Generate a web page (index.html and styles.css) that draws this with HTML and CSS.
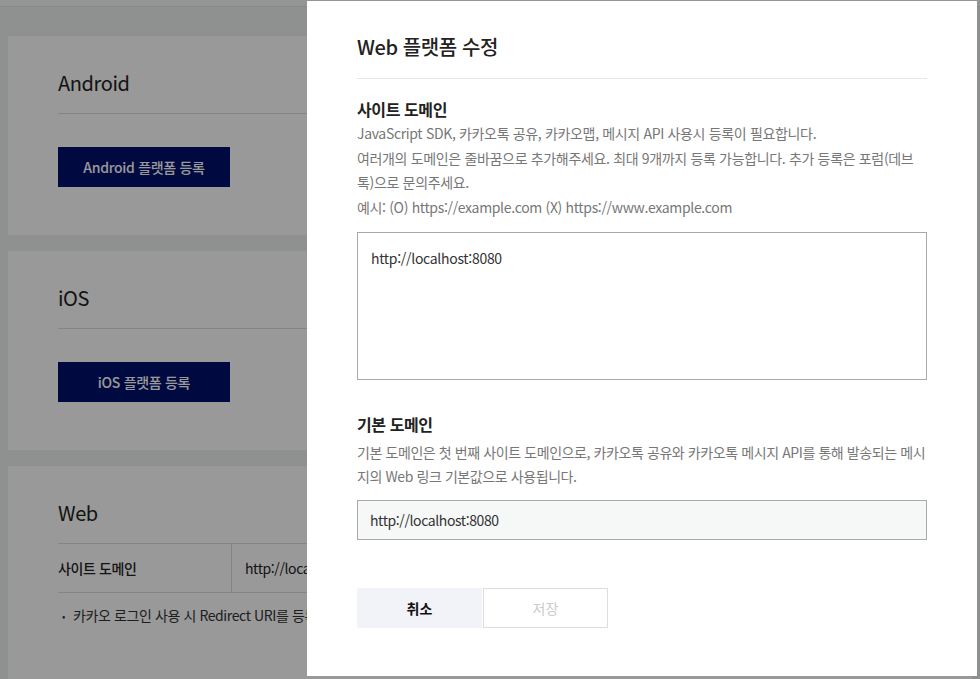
FILE: index.html
```html
<!DOCTYPE html>
<html lang="ko">
<head>
    <meta charset="UTF-8">
    <meta name="viewport" content="width=device-width, initial-scale=1.0">
    <title>플랫폼</title>
    <link rel="stylesheet" href="styles.css">
</head>
<body>
    <div class="cabecera"></div>
    <div class="contenido">
        <div class="tarjeta">
            <h2 class="tarjeta-titulo">Android</h2>
            <button class="boton-registro">Android 플랫폼 등록</button>
        </div>
        <div class="tarjeta">
            <h2 class="tarjeta-titulo">iOS</h2>
            <button class="boton-registro">iOS 플랫폼 등록</button>
        </div>
        <div class="tarjeta tarjeta-web">
            <h2 class="tarjeta-titulo">Web</h2>
            <div class="tabla-fila">
                <div class="tabla-celda tabla-nombre">사이트 도메인</div>
                <div class="tabla-celda">http://localhost:8080</div>
            </div>
            <ul class="notas">
                <li>카카오 로그인 사용 시 Redirect URI를 등록해야 합니다.</li>
            </ul>
        </div>
    </div>

    <div class="capa"></div>

    <div class="modal">
        <h1 class="modal-titulo">Web 플랫폼 수정</h1>
        <div class="campo">
            <h3>사이트 도메인</h3>
            <p class="ayuda">JavaScript SDK, 카카오톡 공유, 카카오맵, 메시지 API 사용시 등록이 필요합니다.<br>
            여러개의 도메인은 줄바꿈으로 추가해주세요. 최대 9개까지 등록 가능합니다. 추가 등록은 포럼(데브톡)으로 문의주세요.<br>
            예시: (O) https://example.com (X) https://www.example.com</p>
            <textarea class="area-dominios">http://localhost:8080</textarea>
        </div>
        <div class="campo campo-basico">
            <h3>기본 도메인</h3>
            <p class="ayuda ayuda-corta">기본 도메인은 첫 번째 사이트 도메인으로, 카카오톡 공유와 카카오톡 메시지 API를 통해 발송되는 메시지의 Web 링크 기본값으로 사용됩니다.</p>
            <div class="selector">http://localhost:8080</div>
        </div>
        <div class="acciones">
            <button class="boton-cancelar">취소</button>
            <button class="boton-guardar" disabled>저장</button>
        </div>
    </div>
</body>
</html>
```

FILE: styles.css
```css
body {
    margin: 0;
    font-family: "Noto Sans CJK KR", "Noto Sans", sans-serif;
    background-color: #eef0f0;
    color: #222;
    letter-spacing: -0.4px;
    overflow: hidden;
}
.cabecera {
    height: 6px;
    background-color: #f8f8f8;
    border-bottom: 1px solid #e4e4e4;
}
.contenido {
    padding: 29px 8px 0 8px;
    display: flex;
    flex-direction: column;
    gap: 16px;
}
.tarjeta {
    background-color: #fff;
    padding: 35px 50px 48px 50px;
}
.tarjeta-titulo {
    margin: 0;
    font-size: 20px;
    font-weight: 400;
    line-height: 24px;
    padding-bottom: 18px;
    border-bottom: 1px solid #ddd;
}
.boton-registro {
    display: block;
    margin-top: 33px;
    width: 172px;
    height: 40px;
    border: none;
    background-color: #00106c;
    color: #fff;
    font-family: inherit;
    font-size: 14px;
    font-weight: 500;
    letter-spacing: -0.3px;
    cursor: pointer;
}
.tarjeta-web {
    padding-bottom: 60px;
}
.tabla-fila {
    display: flex;
    height: 48px;
    border-bottom: 1px solid #ddd;
}
.tabla-celda {
    display: flex;
    align-items: center;
    font-size: 14px;
    padding-left: 13px;
}
.tabla-nombre {
    width: 173px;
    padding-left: 0;
    font-weight: 500;
    border-right: 1px solid #ddd;
}
.notas {
    list-style: none;
    margin: 12px 0 0 0;
    padding-left: 4px;
    font-size: 14px;
    color: #333;
}
.notas li::before {
    content: "•";
    font-size: 10px;
    margin-right: 8px;
    vertical-align: 1px;
}
.capa {
    position: fixed;
    top: 0;
    left: 0;
    right: 0;
    bottom: 0;
    background-color: rgba(0,0,0,0.4);
}
.modal {
    position: fixed;
    top: 1px;
    left: 307px;
    width: 570px;
    bottom: 3px;
    background-color: #fff;
    padding: 0 50px;
}
.modal-titulo {
    margin: 0;
    padding: 31px 0 16px 0;
    font-size: 20px;
    font-weight: 500;
    line-height: 30px;
    border-bottom: 1px solid #e6e6e6;
}
.campo h3 {
    margin: 0;
    font-size: 16px;
    font-weight: 700;
    line-height: 24px;
}
.campo {
    margin-top: 18px;
}
.campo-basico {
    margin-top: 32px;
}
.ayuda {
    margin: 0;
    font-size: 14px;
    line-height: 24.7px;
    letter-spacing: -0.34px;
    color: #777;
}
.ayuda-corta {
    line-height: 24px;
    margin-top: 4px;
    letter-spacing: -0.41px;
}
.area-dominios {
    display: block;
    box-sizing: border-box;
    width: 100%;
    height: 148px;
    margin-top: 12px;
    padding: 15px 13px;
    border: 1px solid #aaa;
    font-family: inherit;
    font-size: 14px;
    letter-spacing: -0.3px;
    color: #333;
    resize: none;
}
.selector {
    box-sizing: border-box;
    height: 40px;
    margin-top: 12px;
    padding-left: 12px;
    display: flex;
    align-items: center;
    background-color: #f6f7f7;
    border: 1px solid #aaa;
    font-size: 14px;
    color: #333;
}
.acciones {
    display: flex;
    gap: 1px;
    margin-top: 48px;
}
.acciones button {
    width: 125px;
    height: 40px;
    font-family: inherit;
    font-size: 14px;
    cursor: pointer;
}
.boton-cancelar {
    border: none;
    background-color: #f2f3f9;
    color: #111;
    font-weight: 700;
}
.boton-guardar {
    background-color: #fff;
    border: 1px solid #ddd;
    color: #ccc;
}
```
